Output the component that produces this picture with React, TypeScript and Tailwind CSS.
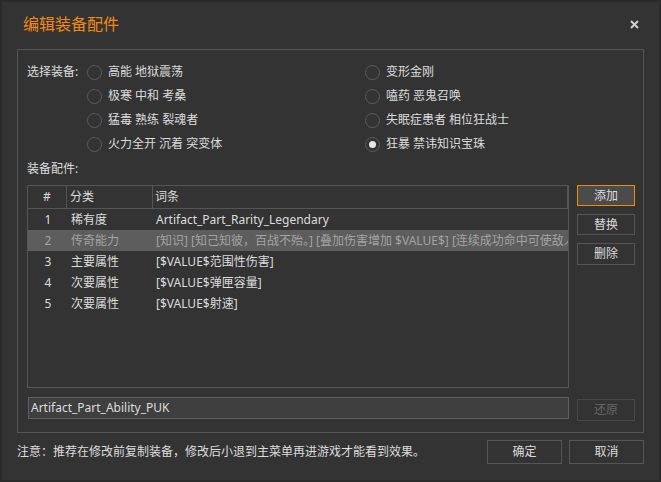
import React from 'react';

const font = { fontFamily: '"Noto Sans", "Noto Sans CJK SC", sans-serif' };

const leftItems = ['高能 地狱震荡', '极寒 中和 考桑', '猛毒 熟练 裂魂者', '火力全开 沉着 突变体'];
const rightItems = ['变形金刚', '嗑药 恶鬼召唤', '失眠症患者 相位狂战士', '狂暴 禁讳知识宝珠'];

const rows = [
  { no: '1', cat: '稀有度', text: 'Artifact_Part_Rarity_Legendary' },
  {
    no: '2',
    cat: '传奇能力',
    text: '[知识] [知己知彼，百战不殆。] [叠加伤害增加 $VALUE$] [连续成功命中可使敌人受到的伤害增加]',
    selected: true,
  },
  { no: '3', cat: '主要属性', text: '[$VALUE$范围性伤害]' },
  { no: '4', cat: '次要属性', text: '[$VALUE$弹匣容量]' },
  { no: '5', cat: '次要属性', text: '[$VALUE$射速]' },
];

const Radio: React.FC<{ label: string; checked?: boolean }> = ({ label, checked }) => (
  <div className="h-6 flex items-center gap-[6px]">
    <span className="size-[15px] rounded-full border border-[#5c5c5c] flex items-center justify-center">
      {checked && <span className="size-[7px] rounded-full bg-[#e6e6e6]" />}
    </span>
    <span>{label}</span>
  </div>
);

const Button: React.FC<{ label: string; primary?: boolean; disabled?: boolean; className?: string }> = ({
  label,
  primary,
  disabled,
  className,
}) => (
  <button
    className={`flex items-center justify-center border ${
      primary
        ? 'border-[#f08c00] bg-[#4b4b4b]'
        : disabled
        ? 'border-[#484848] text-[#666666]'
        : 'border-[#555555]'
    } ${className ?? ''}`}
  >
    {label}
  </button>
);

export default function App() {
  return (
    <div
      style={font}
      className="w-[661px] h-[482px] bg-[#333333] border-2 border-[#2a2a2a] text-[12px] text-[#dcdcdc] flex flex-col overflow-hidden"
    >
      {/* title */}
      <div className="h-[47px] flex items-center justify-between pl-[21px] pr-[20px] pb-[4px]">
        <h1 className="text-[16px] text-[#f28a12] leading-none">编辑装备配件</h1>
        <svg width="9" height="9" viewBox="0 0 9 9" className="mt-[2px]">
          <path d="M1 1 L8 8 M8 1 L1 8" stroke="#d0d0d0" strokeWidth="2" />
        </svg>
      </div>

      {/* group box */}
      <div className="ml-[15px] w-[627px] h-[384px] border border-[#555555] flex flex-col pl-[9px] pt-[10px]">
        <div className="flex">
          <div className="w-[60px] h-6 flex items-center">选择装备:</div>
          <div className="w-[278px] flex flex-col">
            {leftItems.map((t) => (
              <Radio key={t} label={t} />
            ))}
          </div>
          <div className="flex flex-col">
            {rightItems.map((t, i) => (
              <Radio key={t} label={t} checked={i === 3} />
            ))}
          </div>
        </div>

        <div className="h-4 flex items-center mt-[5px]">装备配件:</div>

        <div className="flex gap-[8px] mt-[8px]">
          {/* table */}
          <div className="w-[542px] h-[203px] border border-[#555555] flex flex-col overflow-hidden">
            <div className="h-[23px] flex border-b border-[#555555] shrink-0">
              <div className="w-[39px] border-r border-[#555555] flex items-center justify-center">#</div>
              <div className="w-[86px] border-r border-[#555555] flex items-center pl-[3px]">分类</div>
              <div className="flex-1 border-r border-[#555555] flex items-center pl-[2px]">词条</div>
            </div>
            {rows.map((r) => (
              <div
                key={r.no}
                className={`h-[21px] flex shrink-0 whitespace-nowrap ${
                  r.selected ? 'bg-[#5d5d5d] text-[#a3a3a3]' : ''
                }`}
              >
                <div className="w-[40px] flex items-center justify-center">{r.no}</div>
                <div className="w-[86px] flex items-center pl-[3px]">{r.cat}</div>
                <div className="flex-1 flex items-center pl-[2px] overflow-hidden">{r.text}</div>
              </div>
            ))}
          </div>

          {/* side buttons */}
          <div className="flex flex-col gap-[8px]">
            <Button label="添加" primary className="w-[58px] h-[21px]" />
            <Button label="替换" className="w-[58px] h-[21px]" />
            <Button label="删除" className="w-[58px] h-[22px]" />
          </div>
        </div>

        <div className="flex gap-[8px] mt-[9px] items-start">
          <div className="w-[541px] h-[22px] ml-[1px] bg-[#3f3f3f] border border-[#5f5f5f] flex items-center pl-[2px]">
            Artifact_Part_Ability_PUK
          </div>
          <Button label="还原" disabled className="w-[58px] h-[22px] mt-[2px]" />
        </div>
      </div>

      {/* footer */}
      <div className="flex items-center justify-between pl-[15px] pr-[15px] mt-[7px]">
        <span>注意：推荐在修改前复制装备，修改后小退到主菜单再进游戏才能看到效果。</span>
        <div className="flex gap-[7px]">
          <Button label="确定" className="w-[75px] h-[24px]" />
          <Button label="取消" className="w-[75px] h-[24px]" />
        </div>
      </div>
    </div>
  );
}
